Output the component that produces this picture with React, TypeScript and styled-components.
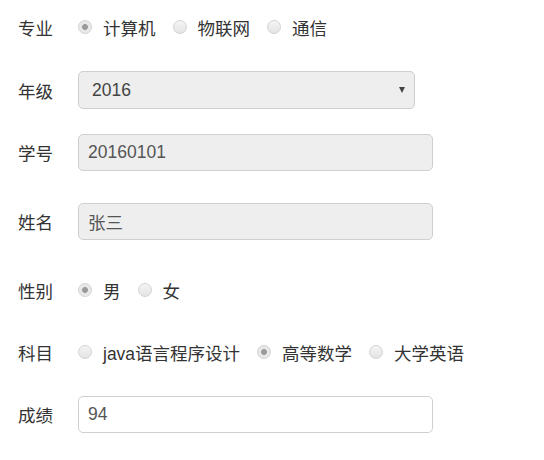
import React from "react";
import styled, { createGlobalStyle } from "styled-components";

const GlobalStyle = createGlobalStyle`
    body {
        margin: 0;
        background: #fff;
        font-family: "Liberation Sans", "Noto Sans CJK SC", sans-serif;
        color: #333;
    }
`;

const Form = styled.form`
    display: flex;
    flex-direction: column;
    padding: 9px 0 0 18px;
`;

const Row = styled.div<{ $height: number; $gap: number }>`
    display: flex;
    align-items: center;
    height: ${props => props.$height}px;
    margin-bottom: ${props => props.$gap}px;
`;

const Label = styled.span`
    width: 60px;
    flex-shrink: 0;
    font-size: 17.5px;
    color: #333;
`;

const Choice = styled.label`
    display: flex;
    align-items: center;
    margin-right: 17px;
    font-size: 17.5px;
    color: #333;
`;

const Radio = styled.input.attrs({ type: "radio" })`
    appearance: none;
    width: 14px;
    height: 14px;
    margin: 0 11px 0 0;
    border-radius: 50%;
    border: 1px solid #d4d4d4;
    background: linear-gradient(#f4f4f4, #e4e4e4);
    box-sizing: border-box;
    &:checked {
        background: radial-gradient(circle, #9a9a9a 0 2.6px, #e8e8e8 3.2px);
    }
`;

const Field = styled.input<{ $width: number; $fill: string }>`
    width: ${props => props.$width}px;
    height: 37px;
    box-sizing: border-box;
    padding: 0 9px;
    border: 1px solid #cfcfcf;
    border-radius: 5px;
    background: ${props => props.$fill};
    font-family: "Liberation Sans", "Noto Sans CJK SC", sans-serif;
    font-size: 17.5px;
    color: #555;
    outline: none;
`;

const SelectBox = styled.div`
    position: relative;
    width: 337px;
    height: 38px;
`;

const Select = styled.select`
    appearance: none;
    width: 100%;
    height: 100%;
    box-sizing: border-box;
    padding: 0 0 0 13px;
    border: 1px solid #cfcfcf;
    border-radius: 5px;
    background: #eee;
    font-family: "Liberation Sans", "Noto Sans CJK SC", sans-serif;
    font-size: 17.5px;
    color: #444;
    outline: none;
`;

const Caret = styled.span`
    position: absolute;
    right: 10px;
    top: 16px;
    width: 0;
    height: 0;
    border-left: 3.5px solid transparent;
    border-right: 3.5px solid transparent;
    border-top: 6px solid #444;
    pointer-events: none;
`;

interface RadioGroupProps {
    name: string;
    options: string[];
    checked: string;
}

const RadioGroup = ({ name, options, checked }: RadioGroupProps) => (
    <>
        {options.map(option => (
            <Choice key={option}>
                <Radio name={name} defaultChecked={option === checked} />
                {option}
            </Choice>
        ))}
    </>
);

const App = () => {
    return (
        <>
            <GlobalStyle />
            <Form onSubmit={e => e.preventDefault()}>
                <Row $height={36} $gap={26}>
                    <Label>专业</Label>
                    <RadioGroup name="major" options={["计算机", "物联网", "通信"]} checked="计算机" />
                </Row>
                <Row $height={38} $gap={25}>
                    <Label>年级</Label>
                    <SelectBox>
                        <Select defaultValue="2016">
                            <option>2015</option>
                            <option>2016</option>
                            <option>2017</option>
                        </Select>
                        <Caret />
                    </SelectBox>
                </Row>
                <Row $height={37} $gap={32}>
                    <Label>学号</Label>
                    <Field $width={355} $fill="#eee" readOnly defaultValue="20160101" />
                </Row>
                <Row $height={37} $gap={32}>
                    <Label>姓名</Label>
                    <Field $width={355} $fill="#eee" readOnly defaultValue="张三" />
                </Row>
                <Row $height={36} $gap={26}>
                    <Label>性别</Label>
                    <RadioGroup name="sex" options={["男", "女"]} checked="男" />
                </Row>
                <Row $height={36} $gap={26}>
                    <Label>科目</Label>
                    <RadioGroup name="course" options={["java语言程序设计", "高等数学", "大学英语"]} checked="高等数学" />
                </Row>
                <Row $height={37} $gap={0}>
                    <Label>成绩</Label>
                    <Field $width={355} $fill="#fff" defaultValue="94" />
                </Row>
            </Form>
        </>
    );
};

export default App;
